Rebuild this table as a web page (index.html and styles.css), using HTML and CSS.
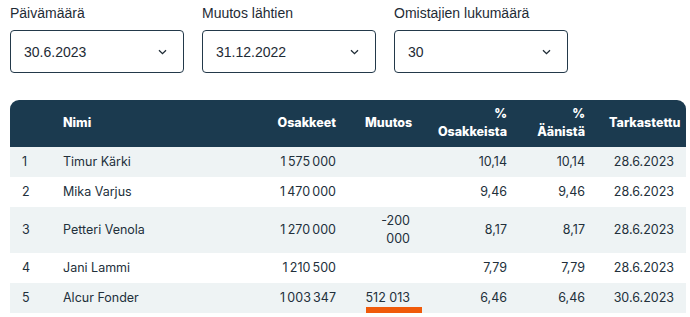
FILE: index.html
```html
<!DOCTYPE html>
<html lang="fi">
<head>
<meta charset="utf-8">
<link rel="stylesheet" href="styles.css">
</head>
<body>
<div class="filters">
  <div class="field">
    <div class="label">Päivämäärä</div>
    <div class="select"><span>30.6.2023</span><svg class="chev" width="9" height="6" viewBox="0 0 9 6"><path d="M1 1.2l3.5 3.5 3.5-3.5" fill="none" stroke="#1e2b35" stroke-width="1.3"/></svg></div>
  </div>
  <div class="field">
    <div class="label">Muutos lähtien</div>
    <div class="select"><span>31.12.2022</span><svg class="chev" width="9" height="6" viewBox="0 0 9 6"><path d="M1 1.2l3.5 3.5 3.5-3.5" fill="none" stroke="#1e2b35" stroke-width="1.3"/></svg></div>
  </div>
  <div class="field">
    <div class="label">Omistajien lukumäärä</div>
    <div class="select"><span>30</span><svg class="chev" width="9" height="6" viewBox="0 0 9 6"><path d="M1 1.2l3.5 3.5 3.5-3.5" fill="none" stroke="#1e2b35" stroke-width="1.3"/></svg></div>
  </div>
</div>
<table class="owners">
  <colgroup>
    <col class="c-no"><col class="c-name"><col class="c-shares"><col class="c-change"><col class="c-pct"><col class="c-votes"><col class="c-date">
  </colgroup>
  <thead>
    <tr>
      <th></th>
      <th class="l">Nimi</th>
      <th>Osakkeet</th>
      <th class="chg">Muutos</th>
      <th>%<br>Osakkeista</th>
      <th>%<br>Äänistä</th>
      <th>Tarkastettu</th>
    </tr>
  </thead>
  <tbody>
    <tr><td class="l">1</td><td class="l">Timur Kärki</td><td>1&#8239;575&#8239;000</td><td class="chg"></td><td>10,14</td><td>10,14</td><td>28.6.2023</td></tr>
    <tr><td class="l">2</td><td class="l">Mika Varjus</td><td>1&#8239;470&#8239;000</td><td class="chg"></td><td>9,46</td><td>9,46</td><td>28.6.2023</td></tr>
    <tr><td class="l">3</td><td class="l">Petteri Venola</td><td>1&#8239;270&#8239;000</td><td class="chg">-200 000</td><td>8,17</td><td>8,17</td><td>28.6.2023</td></tr>
    <tr><td class="l">4</td><td class="l">Jani Lammi</td><td>1&#8239;210&#8239;500</td><td class="chg"></td><td>7,79</td><td>7,79</td><td>28.6.2023</td></tr>
    <tr><td class="l">5</td><td class="l">Alcur Fonder</td><td>1&#8239;003&#8239;347</td><td class="chg mark"><span class="nw">512&nbsp;013</span><span class="underline"></span></td><td>6,46</td><td>6,46</td><td>30.6.2023</td></tr>
  </tbody>
</table>
</body>
</html>
```

FILE: styles.css
```css
html, body {
  margin: 0;
  padding: 0;
  background: #ffffff;
}
body {
  padding: 0 4px 0 10px;
  color: #1e2b35;
  font-family: "Liberation Sans", Arial, sans-serif;
}
.filters {
  display: flex;
  gap: 18px;
  padding-top: 5px;
}
.field {
  width: 174px;
}
.label {
  font-size: 14px;
  line-height: 17px;
  height: 17px;
  margin-bottom: 8px;
}
.select {
  box-sizing: border-box;
  height: 43px;
  border: 1px solid #23394a;
  border-radius: 4px;
  display: flex;
  align-items: center;
  justify-content: space-between;
  padding: 0 16px 0 13px;
  font-size: 14px;
}
.chev {
  display: block;
}
.owners {
  margin-top: 27px;
  width: 676px;
  table-layout: fixed;
  border-collapse: separate;
  border-spacing: 0;
  font-family: Inter, "Noto Sans", sans-serif;
  font-size: 12.5px;
  line-height: 18px;
  color: #22303b;
}
.c-no { width: 41px; }
.c-name { width: 199px; }
.c-shares { width: 98px; }
.c-change { width: 74px; }
.c-pct { width: 97px; }
.c-votes { width: 78px; }
.c-date { width: 89px; }
.owners th {
  background: #1b3a4f;
  color: #ffffff;
  font-weight: 800;
  text-align: right;
  vertical-align: middle;
  padding: 5px 12px 6px 12px;
  height: 36px;
}
.owners th:first-child { border-top-left-radius: 9px; }
.owners th:last-child { border-top-right-radius: 9px; }
.owners td {
  text-align: right;
  vertical-align: middle;
  padding: 6px 12px 6px 12px;
  white-space: nowrap;
}
.owners th.l, .owners td.l { text-align: left; }
.owners td.chg, .owners th.chg {
  padding-left: 17px;
  white-space: normal;
}
.nw { white-space: nowrap; }
.owners tbody tr:nth-child(odd) td { background: #eef3f4; }
.owners tbody tr:nth-child(3) td { padding-top: 5px; padding-bottom: 5px; }
.mark { position: relative; }
.underline {
  position: absolute;
  left: 18px;
  right: 0;
  bottom: -1px;
  height: 7px;
  background: #f05a0a;
}
```
